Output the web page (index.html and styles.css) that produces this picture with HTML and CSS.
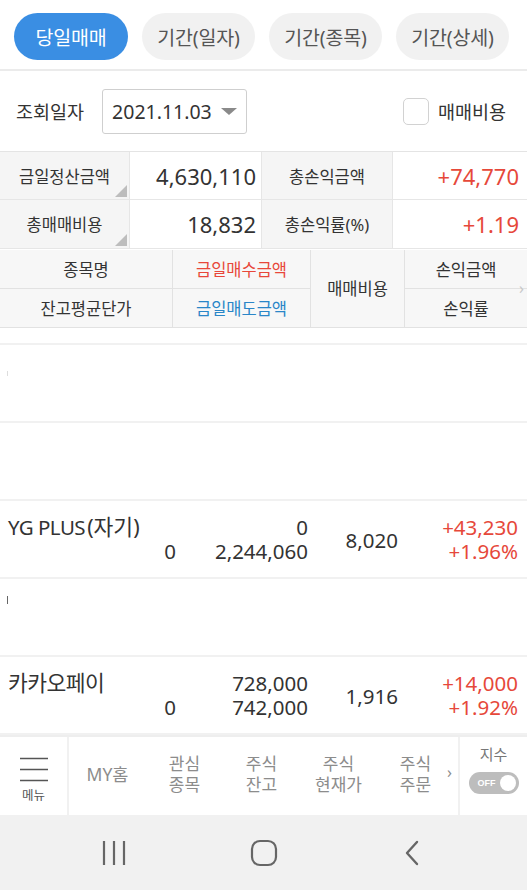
FILE: index.html
```html
<!DOCTYPE html>
<html lang="ko">
<head>
<meta charset="utf-8">
<link rel="stylesheet" href="styles.css">
</head>
<body>
<div class="page">
  <div class="tabs">
    <div class="tab active">당일매매</div>
    <div class="tab">기간(일자)</div>
    <div class="tab">기간(종목)</div>
    <div class="tab">기간(상세)</div>
  </div>

  <div class="query">
    <span class="qlabel">조회일자</span>
    <div class="select">
      <span>2021.11.03</span>
      <span class="caret"></span>
    </div>
    <div class="spacer"></div>
    <span class="check"></span>
    <span class="checklabel">매매비용</span>
  </div>

  <div class="summary">
    <div class="s-label tri">금일정산금액</div>
    <div class="s-val">4,630,110</div>
    <div class="s-label">총손익금액</div>
    <div class="s-val up">+74,770</div>
    <div class="s-label tri">총매매비용</div>
    <div class="s-val">18,832</div>
    <div class="s-label">총손익률(%)</div>
    <div class="s-val up">+1.19</div>
  </div>

  <div class="head">
    <div class="h c1">종목명</div>
    <div class="h c2 red">금일매수금액</div>
    <div class="h c3 span">매매비용</div>
    <div class="h c4">손익금액</div>
    <div class="h c1">잔고평균단가</div>
    <div class="h c2 blue">금일매도금액</div>
    <div class="h c4">손익률</div>
    <span class="more">›</span>
  </div>

  <div class="list">
    <div class="row"><span class="tick t1"></span></div>
    <div class="row"></div>
    <div class="row">
      <div class="col1"><span class="name">YG PLUS<span class="ko">(자기)</span></span><span class="num">0</span></div>
      <div class="col2"><span>0</span><span>2,244,060</span></div>
      <div class="col3">8,020</div>
      <div class="col4 up"><span>+43,230</span><span>+1.96%</span></div>
    </div>
    <div class="row"><span class="tick t2"></span></div>
    <div class="row">
      <div class="col1"><span class="name ko">카카오페이</span><span class="num">0</span></div>
      <div class="col2"><span>728,000</span><span>742,000</span></div>
      <div class="col3">1,916</div>
      <div class="col4 up"><span>+14,000</span><span>+1.92%</span></div>
    </div>
  </div>

  <div class="nav">
    <div class="menu">
      <svg width="30" height="26" viewBox="0 0 30 26"><path d="M1 1.5H29M1 12.5H29M1 23.5H29" stroke="#555" stroke-width="1.6" fill="none"/></svg>
      <span>메뉴</span>
    </div>
    <div class="items">
      <div class="item single">MY홈</div>
      <div class="item">관심<br>종목</div>
      <div class="item">주식<br>잔고</div>
      <div class="item">주식<br>현재가</div>
      <div class="item">주식<br>주문</div>
      <span class="next">›</span>
    </div>
    <div class="index">
      <span>지수</span>
      <div class="toggle"><span class="off">OFF</span><span class="knob"></span></div>
    </div>
  </div>

  <div class="sysbar">
    <svg width="26" height="26" viewBox="0 0 26 26"><path d="M3 1V25M13 1V25M23 1V25" stroke="#666" stroke-width="2.2" fill="none"/></svg>
    <svg width="28" height="28" viewBox="0 0 28 28"><rect x="2" y="2" width="24" height="24" rx="8" stroke="#666" stroke-width="2.2" fill="none"/></svg>
    <svg width="18" height="28" viewBox="0 0 18 28"><path d="M14 3L4 14L14 25" stroke="#666" stroke-width="2.4" fill="none" stroke-linecap="round" stroke-linejoin="round"/></svg>
  </div>
</div>
</body>
</html>
```

FILE: styles.css
```css
* { box-sizing: border-box; }
html, body { margin: 0; padding: 0; background: #fff; }
body {
  font-family: "Noto Sans", "Noto Sans CJK KR", sans-serif;
  color: #333;
}
.page { width: 527px; height: 890px; overflow: hidden; display: flex; flex-direction: column; }

.tabs {
  height: 71px;
  padding: 13px 0 0 14px;
  display: flex;
  gap: 14px;
  border-bottom: 2px solid #ebebeb;
  flex: none;
}
.tab {
  width: 113px;
  height: 47px;
  border-radius: 24px;
  background: #f1f1f1;
  color: #555;
  font-size: 19.5px;
  display: flex;
  align-items: center;
  justify-content: center;
  letter-spacing: -0.2px;
}
.tab.active { background: #3a8ee3; color: #fff; width: 114px; }

.query {
  height: 80px;
  display: flex;
  align-items: center;
  padding: 0 21px 0 16px;
  flex: none;
}
.qlabel { font-size: 18.5px; color: #333; }
.select {
  margin-left: 18px;
  width: 145px;
  height: 45px;
  border: 1px solid #cfcfcf;
  border-radius: 3px;
  display: flex;
  align-items: center;
  padding: 0 7px 0 9px;
  justify-content: space-between;
  font-size: 19.5px;
  color: #333;
}
.caret {
  width: 0; height: 0;
  border-left: 8px solid transparent;
  border-right: 8px solid transparent;
  border-top: 7px solid #8a8a8a;
  margin-right: 2px;
}
.spacer { flex: 1; }
.check {
  width: 26px; height: 27px;
  border: 1.5px solid #d2d2d2;
  border-radius: 5px;
  margin-right: 9px;
}
.checklabel { font-size: 18.5px; color: #333; }

.summary {
  display: grid;
  grid-template-columns: 130px 132px 131px 134px;
  grid-template-rows: 48px 49px;
  border-top: 1px solid #e4e4e4;
  flex: none;
}
.s-label {
  background: #f5f5f5;
  font-size: 16.5px;
  color: #333;
  display: flex;
  align-items: center;
  justify-content: center;
  border-bottom: 1px solid #e6e6e6;
  border-right: 1px solid #e6e6e6;
  position: relative;
}
.s-label.tri::after {
  content: "";
  position: absolute;
  right: 2px;
  bottom: 2px;
  width: 12px;
  height: 12px;
  background: #bdbdbd;
  clip-path: polygon(100% 0, 100% 100%, 0 100%);
}
.s-val {
  background: #fff;
  font-size: 22px;
  color: #333;
  display: flex;
  align-items: center;
  justify-content: flex-end;
  padding-right: 5px;
  border-bottom: 1px solid #e6e6e6;
  border-right: 1px solid #e6e6e6;
}
.s-val:nth-child(4n) { padding-right: 8px; border-right: none; }
.up { color: #e6483a !important; }

.head {
  position: relative;
  display: grid;
  grid-template-columns: 173px 138px 94px 122px;
  grid-template-rows: 39px 38px;
  background: #f7f7f7;
  border-bottom: 1px solid #e2e2e2;
  flex: none;
  margin-top: 1px;
}
.h {
  font-size: 16.5px;
  color: #333;
  display: flex;
  align-items: center;
  justify-content: center;
  border-right: 1px solid #e2e2e2;
}
.h.c1, .h.c2, .h.c4 { border-bottom: 1px solid #e2e2e2; }
.head .h:nth-child(5), .head .h:nth-child(6), .head .h:nth-child(7) { border-bottom: none; }
.h.c4 { border-right: none; }
.h.span { grid-row: 1 / span 2; grid-column: 3; padding-bottom: 2px; }
.red { color: #e8473a; }
.blue { color: #2a86c8; }
.more {
  position: absolute;
  right: 3px;
  top: 27px;
  font-size: 16px;
  color: #c8c8c8;
}

.list {
  margin-top: 15px;
  border-top: 2px solid #f1f1f1;
  flex: none;
}
.row {
  height: 78px;
  border-bottom: 2px solid #f1f1f1;
  display: grid;
  grid-template-columns: 176px 132px 90px 120px;
  align-items: center;
  font-size: 20.5px;
  color: #333;
  position: relative;
}
.row > div { display: flex; flex-direction: column; line-height: 24px; }
.col1 .name { padding-left: 8px; letter-spacing: -0.5px; }
.ko { font-size: 21.5px; letter-spacing: 0; }
.col1 .name .ko { padding-left: 2px; }
.col1 .num { text-align: right; }
.col2 { text-align: right; }
.col3 { text-align: right; line-height: 24px; padding-top: 2px; }
.col4 { text-align: right; }
.tick { position: absolute; left: 7px; width: 1px; background: #666; }
.t1 { top: 26px; height: 5px; background: #ddd; }
.t2 { top: 17px; height: 8px; }

.nav {
  height: 80px;
  border-top: 2px solid #eeeeee;
  display: flex;
  flex: none;
}
.menu {
  width: 69px;
  border-right: 2px solid #f1f1f1;
  display: flex;
  flex-direction: column;
  align-items: center;
  padding-top: 20px;
  gap: 6px;
}
.menu span { font-size: 12.5px; color: #555; line-height: 14px; }
.items {
  position: relative;
  display: flex;
  width: 389px;
}
.item {
  width: 77px;
  display: flex;
  align-items: center;
  justify-content: center;
  text-align: center;
  font-size: 17px;
  line-height: 21px;
  color: #8c8c8c;
  padding-bottom: 4px;
}
.item.single { font-size: 17.5px; }
.next {
  position: absolute;
  right: 6px;
  top: 24px;
  font-size: 16px;
  color: #8c8c8c;
}
.index {
  flex: 1;
  border-left: 2px solid #f1f1f1;
  display: flex;
  flex-direction: column;
  align-items: center;
  padding-top: 8px;
  gap: 9px;
}
.index > span { font-size: 15px; color: #777; line-height: 18px; }
.toggle {
  width: 50px;
  height: 22px;
  border-radius: 11px;
  background: #bdbdbd;
  display: flex;
  align-items: center;
  justify-content: space-between;
  padding: 0 3px 0 9px;
}
.off { font-size: 9px; color: #fff; font-weight: bold; font-family: "Liberation Sans", sans-serif; }
.knob { width: 16px; height: 16px; border-radius: 50%; background: #fff; }

.sysbar {
  flex: 1;
  background: #f1f1f1;
  display: flex;
  align-items: center;
}
.sysbar svg:nth-child(1) { margin-left: 101px; }
.sysbar svg:nth-child(2) { margin-left: 123px; }
.sysbar svg:nth-child(3) { margin-left: 125px; }
```
